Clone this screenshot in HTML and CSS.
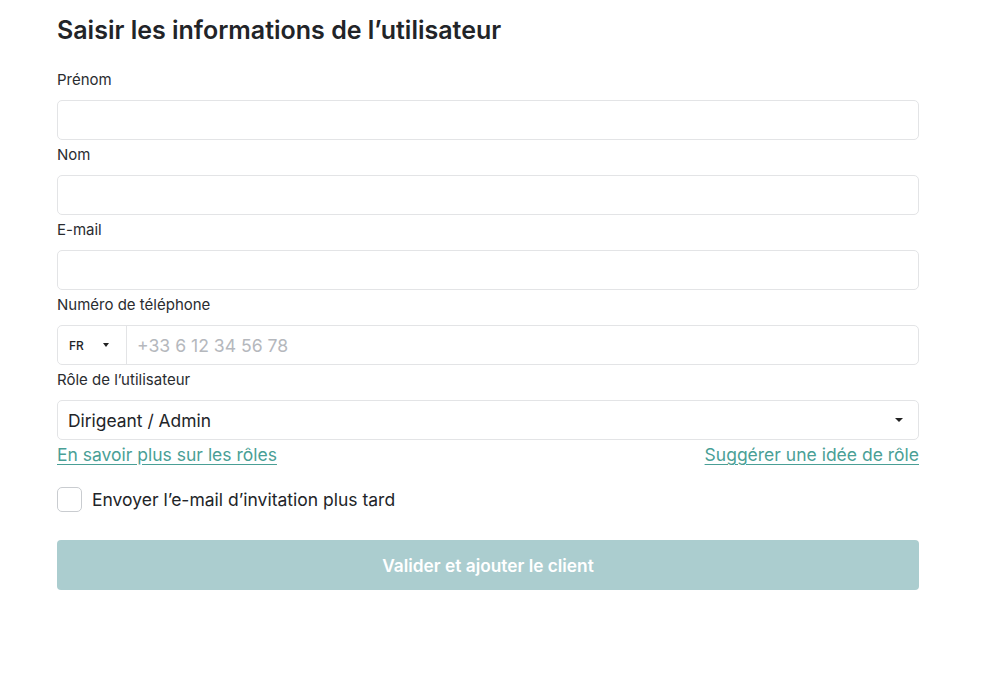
FILE: index.html
```html
<!DOCTYPE html>
<html>

<head>
  <meta charset="utf-8">
  <meta name="viewport" content="width=device-width, initial-scale=1">
  <title>Nouvel utilisateur</title>
  <link rel="stylesheet" href="styles.css">
</head>

<body>
  <form class="user-form">
    <h1 class="title">Saisir les informations de l’utilisateur</h1>

    <label class="field-label" for="firstname">Prénom</label>
    <input class="field" type="text" id="firstname">

    <label class="field-label" for="lastname">Nom</label>
    <input class="field" type="text" id="lastname">

    <label class="field-label" for="email">E-mail</label>
    <input class="field" type="email" id="email">

    <label class="field-label" for="phone">Numéro de téléphone</label>
    <div class="phone">
      <div class="country">
        <span>FR</span>
        <span class="caret small"></span>
      </div>
      <input class="phone-input" type="tel" id="phone" placeholder="+33 6 12 34 56 78">
    </div>

    <label class="field-label" for="role">Rôle de l’utilisateur</label>
    <div class="select" id="role">
      <span>Dirigeant / Admin</span>
      <span class="caret"></span>
    </div>

    <div class="links">
      <a href="#">En savoir plus sur les rôles</a>
      <a href="#">Suggérer une idée de rôle</a>
    </div>

    <label class="check">
      <span class="box"></span>
      <span>Envoyer l’e-mail d’invitation plus tard</span>
    </label>

    <button class="submit" type="button" disabled>Valider et ajouter le client</button>
  </form>
</body>

</html>
```

FILE: styles.css
```css
* {
  box-sizing: border-box;
}

body {
  margin: 0;
  font-family: Inter, "Noto Sans", sans-serif;
  color: #222428;
  background: #fff;
}

.user-form {
  width: 862px;
  margin-left: 57px;
  padding-top: 14px;
  display: flex;
  flex-direction: column;
}

.title {
  margin: 0 0 19px;
  font-size: 25px;
  font-weight: 600;
  line-height: 32px;
}

.field-label {
  font-size: 15px;
  line-height: 20px;
  margin: 5px 0 10px;
  color: #2a2c30;
}

.field,
.phone,
.select {
  height: 40px;
  border: 1px solid #e3e4e6;
  border-radius: 5px;
  background: #fff;
}

.field {
  width: 100%;
  font: inherit;
  padding: 0 10px;
}

.phone {
  display: flex;
}

.country {
  width: 69px;
  display: flex;
  align-items: center;
  padding-left: 11px;
  gap: 19px;
  font-size: 12px;
  font-weight: 500;
  border-right: 1px solid #e3e4e6;
}

.phone-input {
  flex: 1;
  border: 0;
  background: none;
  font: inherit;
  font-size: 17.6px;
  padding: 0 10px;
  outline: none;
}

.phone-input::placeholder {
  color: #b5b8bd;
}

.select {
  display: flex;
  align-items: center;
  justify-content: space-between;
  padding: 0 15px 0 10px;
  font-size: 17.4px;
}

.caret {
  width: 0;
  height: 0;
  border-left: 4px solid transparent;
  border-right: 4px solid transparent;
  border-top: 4px solid #222;
}

.caret.small {
  border-left-width: 3.5px;
  border-right-width: 3.5px;
}

.links {
  display: flex;
  justify-content: space-between;
  font-size: 17.5px;
  line-height: 30px;
}

.links a {
  color: #4a9f96;
  text-decoration: underline;
  text-underline-offset: 3px;
}

.check {
  display: flex;
  align-items: center;
  gap: 10px;
  margin-top: 17px;
  font-size: 17.5px;
}

.box {
  width: 25px;
  height: 25px;
  border: 1px solid #c9ccd0;
  border-radius: 5px;
}

.submit {
  margin-top: 28px;
  height: 50px;
  border: 0;
  border-radius: 4px;
  background: #abcdcf;
  color: #fff;
  font: inherit;
  font-size: 17.3px;
  font-weight: 600;
}
```
